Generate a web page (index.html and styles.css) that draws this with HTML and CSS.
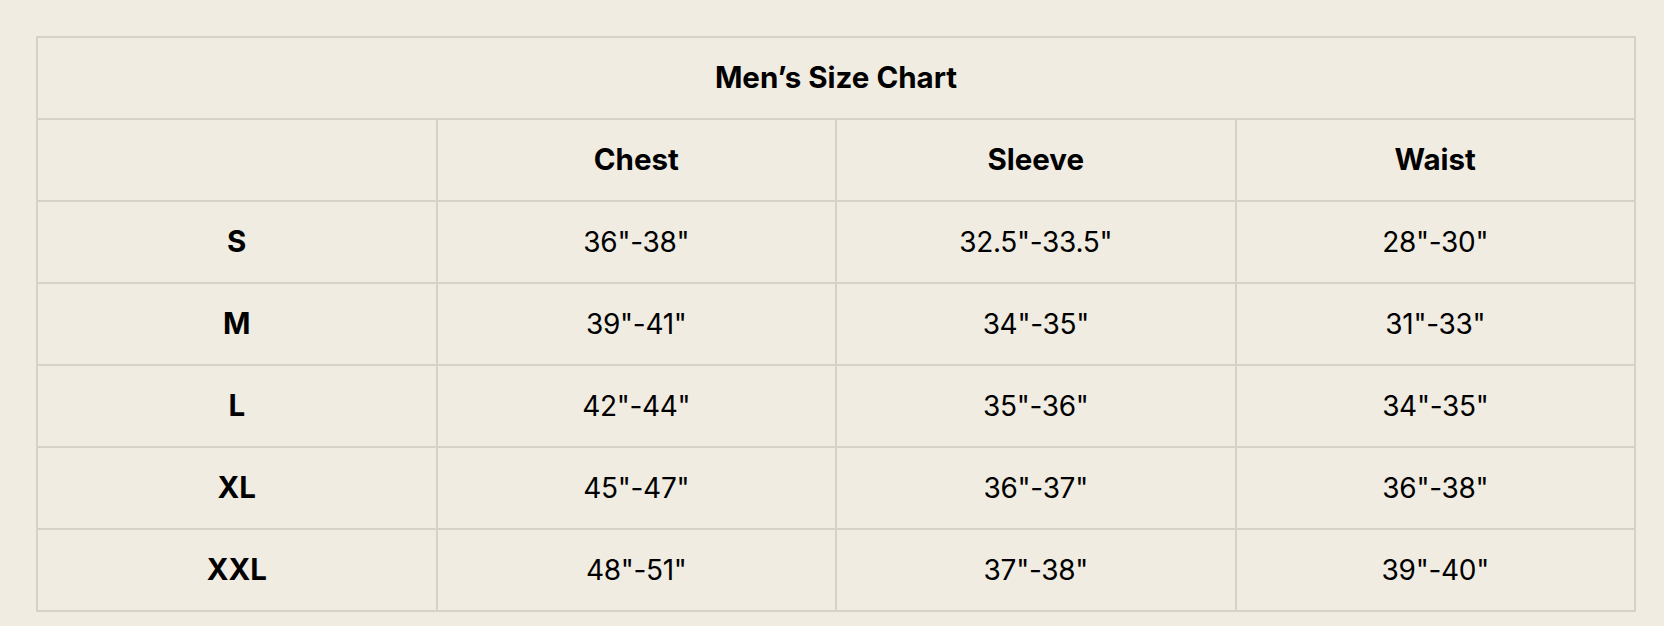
FILE: index.html
```html
<!DOCTYPE html>
<html lang="en">
<head>
<meta charset="utf-8">
<title>Men’s Size Chart</title>
<link rel="stylesheet" href="styles.css">
</head>
<body>
<table class="chart">
  <colgroup><col><col><col><col></colgroup>
  <thead>
    <tr><th class="title" colspan="4">Men’s Size Chart</th></tr>
    <tr><th></th><th>Chest</th><th>Sleeve</th><th>Waist</th></tr>
  </thead>
  <tbody>
    <tr><th>S</th><td>36"-38"</td><td>32.5"-33.5"</td><td>28"-30"</td></tr>
    <tr><th>M</th><td>39"-41"</td><td>34"-35"</td><td>31"-33"</td></tr>
    <tr><th>L</th><td>42"-44"</td><td>35"-36"</td><td>34"-35"</td></tr>
    <tr><th>XL</th><td>45"-47"</td><td>36"-37"</td><td>36"-38"</td></tr>
    <tr><th>XXL</th><td>48"-51"</td><td>37"-38"</td><td>39"-40"</td></tr>
  </tbody>
</table>
</body>
</html>
```
FILE: styles.css
```css
html, body {
  margin: 0;
  padding: 0;
  background: #f0ece1;
}
body {
  padding: 36px 28px 0 36px;
  font-family: "Inter", "Liberation Sans", sans-serif;
  color: #000;
}
.chart {
  width: 1600px;
  table-layout: fixed;
  border-collapse: collapse;
  border: 2px solid #d6d2c6;
}
.chart th, .chart td {
  border: 2px solid #d6d2c6;
  height: 80px;
  padding: 0;
  text-align: center;
  vertical-align: middle;
  line-height: 1;
}
.chart th {
  font-size: 29.5px;
  font-weight: 700;
}
.chart td {
  font-size: 28px;
  font-weight: 400;
  letter-spacing: -0.3px;
}
```
